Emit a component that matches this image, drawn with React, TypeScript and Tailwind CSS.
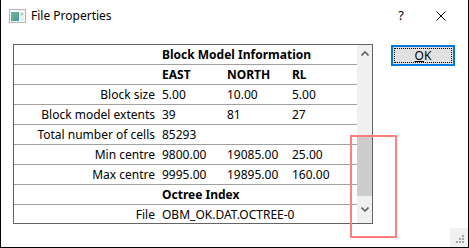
import React from 'react';

const font = { fontFamily: '"Noto Sans", "Liberation Sans", sans-serif' };

interface Row {
  label: string;
  values: string[];
  bold?: boolean;
}

const rows: Row[] = [
  { label: '', values: ['Block Model Information'], bold: true },
  { label: '', values: ['EAST', 'NORTH', 'RL'], bold: true },
  { label: 'Block size', values: ['5.00', '10.00', '5.00'] },
  { label: 'Block model extents', values: ['39', '81', '27'] },
  { label: 'Total number of cells', values: ['85293'] },
  { label: 'Min centre', values: ['9800.00', '19085.00', '25.00'] },
  { label: 'Max centre', values: ['9995.00', '19895.00', '160.00'] },
  { label: '', values: ['Octree Index'], bold: true },
  { label: 'File', values: ['OBM_OK.DAT.OCTREE-0'] },
];

const AppIcon = () => (
  <svg width="17" height="14" viewBox="0 0 17 14">
    <defs>
      <linearGradient id="pic" x1="0" y1="0" x2="1" y2="1">
        <stop offset="0" stopColor="#6fb0d0" />
        <stop offset="0.5" stopColor="#5fae86" />
        <stop offset="1" stopColor="#4c8fb8" />
      </linearGradient>
    </defs>
    <rect x="0.5" y="0.5" width="16" height="13" fill="#f7f7f7" stroke="#b4b4b4" />
    <rect x="2" y="3" width="8" height="9" fill="url(#pic)" />
    <rect x="11" y="3" width="4" height="9" fill="#e8eef0" />
    <rect x="12" y="4" width="2" height="2" fill="#9ec9b0" />
  </svg>
);

const ResizeGrip = () => (
  <svg width="12" height="12" viewBox="0 0 12 12">
    {[
      [8, 2],
      [5, 5],
      [8, 5],
      [2, 8],
      [5, 8],
      [8, 8],
    ].map(([x, y]) => (
      <rect key={`${x}-${y}`} x={x} y={y} width="2" height="2" fill="#a6a6a6" />
    ))}
  </svg>
);

export default function App() {
  return (
    <div
      className="relative w-[469px] h-[248px] bg-white border-l border-r border-b border-black flex flex-col text-[12px] text-black"
      style={font}
    >
      {/* title bar */}
      <div className="h-[31px] flex items-center pl-[8px]">
        <AppIcon />
        <span className="ml-[5px] text-[12px]">File Properties</span>
        <span className="ml-auto mr-[32px] text-[13px]">?</span>
        <svg width="10" height="10" viewBox="0 0 10 10" className="mr-[22px]">
          <path d="M0.5 0.5 L9.5 9.5 M9.5 0.5 L0.5 9.5" stroke="#000" strokeWidth="1" />
        </svg>
      </div>

      <div className="flex pl-[12px] pt-[13px]">
        {/* property grid */}
        <div className="w-[360px] h-[180px] border border-[#646464] flex">
          <div className="flex-1 flex flex-col">
            {rows.map((row, i) => (
              <div
                key={i}
                className={`flex items-center h-[20px] shrink-0 ${
                  i < rows.length - 1 ? 'border-b border-[#a0a0a0]' : ''
                } ${row.bold ? 'font-bold' : ''}`}
              >
                <div className="w-[148px] pr-[7px] text-right whitespace-nowrap">{row.label}</div>
                {row.values.length === 1 ? (
                  <div className="whitespace-nowrap">{row.values[0]}</div>
                ) : (
                  row.values.map((v, j) => (
                    <div key={j} className="w-[65px] whitespace-nowrap">
                      {v}
                    </div>
                  ))
                )}
              </div>
            ))}
          </div>
          {/* scrollbar */}
          <div className="w-[16px] bg-[#f0f0f0] flex flex-col">
            <div className="h-[17px] flex items-center justify-center">
              <svg width="8" height="5" viewBox="0 0 8 5">
                <path d="M0.5 4.5 L4 1 L7.5 4.5" stroke="#606060" strokeWidth="1.6" fill="none" />
              </svg>
            </div>
            <div className="h-[74px]" />
            <div className="h-[60px] bg-[#cdcdcd]" />
            <div className="flex-1 flex items-center justify-center">
              <svg width="8" height="5" viewBox="0 0 8 5">
                <path d="M0.5 0.5 L4 4 L7.5 0.5" stroke="#606060" strokeWidth="1.6" fill="none" />
              </svg>
            </div>
          </div>
        </div>

        {/* OK button */}
        <div className="ml-[18px] mt-[1px] w-[64px] h-[21px] border-2 border-[#0078d7] bg-[#e1e1e1] p-[1px]">
          <div className="w-full h-full border border-dotted border-black flex items-center justify-center">
            <span className="leading-none">
              <span className="underline">O</span>K
            </span>
          </div>
        </div>
      </div>

      {/* annotation highlight */}
      <div className="absolute left-[349px] top-[135px] w-[47px] h-[103px] border-2 border-[#ff7f7f]" />

      {/* resize grip */}
      <div className="absolute right-0 bottom-0 w-[18px] h-[19px] bg-[#f0f0f0] flex items-end justify-end pr-[2px] pb-[2px]">
        <ResizeGrip />
      </div>
    </div>
  );
}
